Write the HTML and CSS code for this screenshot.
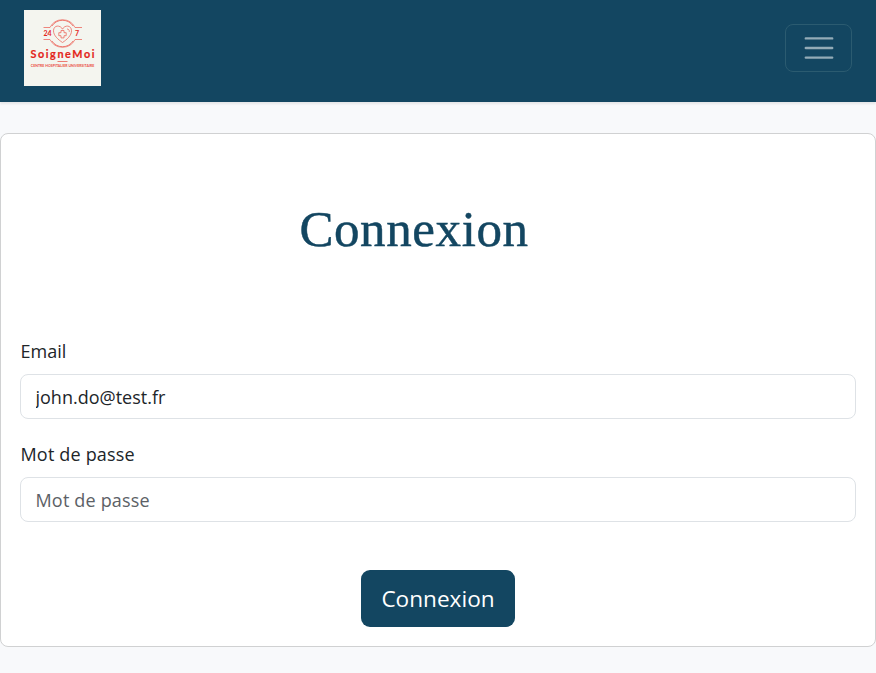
FILE: index.html
```html
<!DOCTYPE html>
<html lang="fr">
<head>
<meta charset="utf-8">
<title>SoigneMoi - Connexion</title>
<link rel="stylesheet" href="styles.css">
</head>
<body>
<header class="navbar">
  <a class="brand" href="#">
    <svg class="logo" viewBox="0 0 77 76" role="img" aria-label="SoigneMoi">
      <g class="logo-lines">
        <path d="M28 16a12.5 12.5 0 0 1 21 0M28 31a12.5 12.5 0 0 0 21 0"/>
        <path d="M19.500 17.500H26a14 14 0 0 1 25 0h7M19.500 29.500H26a14 14 0 0 0 25 0h7"/>
        <path d="M38.500 32.500C34 29.500 29.500 25.500 29.500 20.800c0-6 7-6 9-1.600 2-4.400 9-4.400 9 1.600 0 4.700-4.500 8.700-9 11.700z"/>
        <path d="M37 20.500h3v2.200h2.200v3H40v2.200h-3v-2.200h-2.200v-3H37z"/>
        <path d="M43 19c1.500 0 2.500 1 2.300 2.800"/>
      </g>
      <text class="logo-small" x="19.500" y="26" textLength="8">24</text>
      <text class="logo-small" x="51" y="26">7</text>
      <text class="logo-name" x="6.500" y="47.800" textLength="64">SoigneMoi</text>
      <path class="logo-rule" d="M33.500 51.500h10"/>
      <text class="logo-sub" x="6.800" y="57.300" textLength="63.500" lengthAdjust="spacingAndGlyphs">CENTRE HOSPITALIER UNIVERSITAIRE</text>
    </svg>
  </a>
  <button class="toggler" type="button" aria-label="Menu">
    <svg class="toggler-icon" viewBox="0 0 30 30"><path d="M4 7h22M4 15h22M4 23h22"/></svg>
  </button>
</header>
<main class="card">
  <h1 class="title">Connexion</h1>
  <form class="form">
    <label class="label" for="email">Email</label>
    <input class="input" id="email" type="email" value="john.do@test.fr">
    <label class="label label-password" for="password">Mot de passe</label>
    <input class="input" id="password" type="password" placeholder="Mot de passe">
    <button class="submit" type="button">Connexion</button>
  </form>
</main>
</body>
</html>
```
FILE: styles.css
```css
* { box-sizing: border-box; }

body {
  margin: 0;
  min-height: 673px;
  background: #f8f9fb;
  color: #212529;
  font-family: "Open Sans", sans-serif;
  font-size: 18px;
}

.navbar {
  display: flex;
  justify-content: space-between;
  align-items: flex-start;
  height: 102px;
  padding: 10px 24px;
  background: #134661;
  box-shadow: 0 2px 2px rgba(0, 0, 0, .08);
}

.brand, .logo { display: block; width: 77px; height: 76px; }
.logo { background: #f4f5ef; }
.logo-lines { fill: none; stroke: #ec6a60; stroke-width: .8; }
.logo text { font-family: Lato, sans-serif; fill: #e3261b; }
.logo-small { font-size: 7px; font-weight: 700; }
.logo .logo-name { font-size: 10.800px; font-weight: 700; stroke: #e3261b; stroke-width: .2; }
.logo .logo-sub { font-size: 3.200px; font-weight: 700; fill: #ea4f44; }
.logo-rule { stroke: #ec7b72; stroke-width: 1; }

.toggler {
  display: grid;
  place-items: center;
  width: 67px;
  height: 48px;
  margin-top: 14px;
  padding: 0;
  border: 1px solid #2b5b70;
  border-radius: 8px;
  background: transparent;
}
.toggler-icon { width: 36px; height: 36px; }
.toggler-icon path {
  fill: none;
  stroke: #93abb7;
  stroke-width: 2;
  stroke-linecap: round;
}

.card {
  height: 514px;
  margin-top: 31px;
  padding: 57px 19px 19px;
  border: 1px solid #d0d1d2;
  border-radius: 8px;
  background: #fff;
}

.title {
  height: 76px;
  margin: 0 48px 71px 0;
  color: #134661;
  font: 400 51px/76px "Liberation Serif", serif;
  letter-spacing: .6px;
  text-align: center;
  -webkit-text-stroke: .5px #134661;
}

.form { display: flex; flex-direction: column; }
.label { height: 26px; margin-bottom: 10px; line-height: 26px; padding-left: .5px; }
.label-password { letter-spacing: .18px; }
.input {
  height: 45px;
  margin: 0 0 22px;
  padding: 0 14.500px;
  border: 1px solid #dee2e6;
  border-radius: 8px;
  background: #fff;
  color: #212529;
  font: inherit;
}
.input::placeholder { color: #5c6166; opacity: 1; letter-spacing: .18px; }

.submit {
  align-self: center;
  width: 154px;
  height: 57px;
  margin-top: 26px;
  padding: 0;
  border: 0;
  border-radius: 9px;
  background: #134661;
  color: #fff;
  font: 400 22.600px "Open Sans", sans-serif;
}
```
